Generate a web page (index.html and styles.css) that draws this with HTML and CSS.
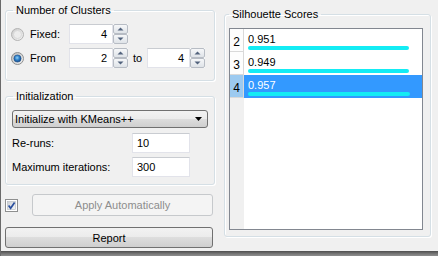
FILE: index.html
```html
<!DOCTYPE html>
<html>
<head>
<meta charset="utf-8">
<link rel="stylesheet" href="styles.css">
</head>
<body>
<div class="window">
  <div class="main">
    <div class="left">
      <fieldset class="group g-clusters">
        <legend>Number of Clusters</legend>
        <div class="row">
          <span class="radio">
            <svg width="13" height="13" viewBox="0 0 13 13"><defs><linearGradient id="ru" x1="0" y1="0" x2="1" y2="1"><stop offset="0" stop-color="#c9c9c9"/><stop offset="1" stop-color="#f6f6f6"/></linearGradient></defs><circle cx="6.5" cy="6.5" r="6" fill="url(#ru)" stroke="#b3b3b3"/><circle cx="6.5" cy="6.5" r="4" fill="#ececec" stroke="#d6d6d6" stroke-width="0.8"/></svg>
          </span>
          <span class="rlabel">Fixed:</span>
          <div class="spin">
            <div class="field">4</div>
            <div class="btns">
              <span class="sbtn"><svg width="7" height="4" viewBox="0 0 7 4"><path d="M0.5 3.5 L3.5 0.5 L6.5 3.5Z" fill="#52637d"/></svg></span>
              <span class="sbtn"><svg width="7" height="4" viewBox="0 0 7 4"><path d="M0.5 0.5 L3.5 3.5 L6.5 0.5Z" fill="#52637d"/></svg></span>
            </div>
          </div>
        </div>
        <div class="row">
          <span class="radio">
            <svg width="13" height="13" viewBox="0 0 13 13"><defs><linearGradient id="rc" x1="0" y1="0" x2="1" y2="1"><stop offset="0" stop-color="#b8b8b8"/><stop offset="1" stop-color="#f4f4f4"/></linearGradient><radialGradient id="rd" cx="45%" cy="40%" r="60%"><stop offset="0" stop-color="#8fd0f5"/><stop offset="0.55" stop-color="#2b7cc6"/><stop offset="1" stop-color="#174a86"/></radialGradient></defs><circle cx="6.5" cy="6.5" r="6" fill="url(#rc)" stroke="#8e8f8f"/><circle cx="6.5" cy="6.5" r="3.6" fill="url(#rd)" stroke="#1d4f8a" stroke-width="0.6"/></svg>
          </span>
          <span class="rlabel">From</span>
          <div class="spin">
            <div class="field">2</div>
            <div class="btns">
              <span class="sbtn"><svg width="7" height="4" viewBox="0 0 7 4"><path d="M0.5 3.5 L3.5 0.5 L6.5 3.5Z" fill="#52637d"/></svg></span>
              <span class="sbtn"><svg width="7" height="4" viewBox="0 0 7 4"><path d="M0.5 0.5 L3.5 3.5 L6.5 0.5Z" fill="#52637d"/></svg></span>
            </div>
          </div>
          <span class="to">to</span>
          <div class="spin spin2">
            <div class="field">4</div>
            <div class="btns">
              <span class="sbtn"><svg width="7" height="4" viewBox="0 0 7 4"><path d="M0.5 3.5 L3.5 0.5 L6.5 3.5Z" fill="#52637d"/></svg></span>
              <span class="sbtn"><svg width="7" height="4" viewBox="0 0 7 4"><path d="M0.5 0.5 L3.5 3.5 L6.5 0.5Z" fill="#52637d"/></svg></span>
            </div>
          </div>
        </div>
      </fieldset>

      <fieldset class="group g-init">
        <legend>Initialization</legend>
        <div class="combo">
          <span>Initialize with KMeans++</span>
          <svg width="7" height="4" viewBox="0 0 7 4"><path d="M0 0 L7 0 L3.5 4Z" fill="#000"/></svg>
        </div>
        <div class="frow f1"><span class="flabel">Re-runs:</span><div class="input">10</div></div>
        <div class="frow f2"><span class="flabel">Maximum iterations:</span><div class="input">300</div></div>
      </fieldset>

      <div class="apply-row">
        <span class="checkbox">
          <svg width="13" height="13" viewBox="0 0 13 13"><defs><linearGradient id="cb" x1="0" y1="0" x2="1" y2="1"><stop offset="0" stop-color="#cbcfd5"/><stop offset="1" stop-color="#f7f7f7"/></linearGradient></defs><rect x="0.5" y="0.5" width="12" height="12" fill="#fff" stroke="#8e8f8f"/><rect x="2.5" y="2.5" width="8" height="8" fill="url(#cb)" stroke="#b5b9bf" stroke-width="0.6"/><path d="M3.6 6.6 L5.6 9.2 L9.6 3.4" fill="none" stroke="#2b4f9e" stroke-width="1.7"/></svg>
        </span>
        <div class="btn disabled">Apply Automatically</div>
      </div>
      <div class="btn report">Report</div>
    </div>

    <div class="right">
      <fieldset class="group g-scores">
        <legend>Silhouette Scores</legend>
        <div class="list">
          <div class="lrow">
            <div class="hdr">2</div>
            <div class="cell"><div class="val">0.951</div><div class="bar" style="width:161px"></div></div>
          </div>
          <div class="lrow">
            <div class="hdr">3</div>
            <div class="cell"><div class="val">0.949</div><div class="bar" style="width:161px"></div></div>
          </div>
          <div class="lrow sel">
            <div class="hdr">4</div>
            <div class="cell"><div class="val">0.957</div><div class="bar" style="width:162px"></div></div>
          </div>
        </div>
      </fieldset>
    </div>
  </div>
  <div class="taskbar"></div>
</div>
</body>
</html>
```

FILE: styles.css
```css
html, body {
  margin: 0;
  padding: 0;
}
body {
  background: #f0f0f0;
  font-family: "Liberation Sans", Arial, sans-serif;
  font-size: 11px;
  color: #000;
}
.window {
  width: 438px;
  height: 256px;
  box-sizing: border-box;
  border-left: 1px solid #6a6a6a;
  display: flex;
  flex-direction: column;
  overflow: hidden;
}
.main {
  flex: 1;
  display: flex;
  padding-left: 4px;
  gap: 9px;
}
.left {
  width: 210px;
  display: flex;
  flex-direction: column;
  padding-top: 4px;
}
.right {
  width: 207px;
  padding-top: 8px;
}
.taskbar {
  height: 5px;
  background: linear-gradient(#4e4e4e, #7a7a7a 60%, #8e8e8e);
}

/* group boxes */
fieldset.group {
  margin: 0;
  min-width: 0;
  border: 1px solid #d5dfe5;
  border-radius: 3px;
  box-shadow: inset 1px 1px 0 #fff, 1px 1px 0 #fff;
  padding: 7px 5px 12px;
}
legend {
  padding: 0 3px;
  margin-left: 2px;
  line-height: 13px;
}
.g-init {
  margin-top: 9px !important;
  padding-bottom: 7px !important;
}
.g-scores {
  padding: 7px 7px 6px 4px !important;
}
.g-scores legend {
  margin-left: 0;
}

/* clusters rows */
.row {
  display: flex;
  align-items: center;
  height: 20px;
}
.row + .row {
  margin-top: 4px;
}
.radio {
  width: 13px;
  height: 13px;
  display: flex;
}
.rlabel {
  margin-left: 6px;
  width: 39px;
}
.spin {
  display: flex;
  width: 59px;
  height: 20px;
}
.spin2 {
  width: 58px;
}
.field {
  flex: 1;
  background: #fff;
  border: 1px solid #e2e3ea;
  border-top-color: #c9ccd1;
  text-align: right;
  padding-right: 5px;
  line-height: 18px;
}
.btns {
  width: 15px;
  display: flex;
  flex-direction: column;
  background: #fff;
}
.sbtn {
  flex: 1;
  display: flex;
  align-items: center;
  justify-content: center;
  border: 1px solid #b7bcc4;
  border-radius: 2px;
  background: linear-gradient(#f6f7f9, #dfe3e8);
}
.to {
  margin-left: 5px;
  width: 14px;
}

/* init */
.combo {
  margin: 0 1px;
  height: 18px;
  box-sizing: border-box;
  border: 1px solid #707070;
  border-radius: 3px;
  background: linear-gradient(#f2f2f2 0%, #ebebeb 50%, #dddddd 50%, #cfcfcf 100%);
  display: flex;
  align-items: center;
  justify-content: space-between;
  padding: 0 5px 0 2px;
}
.frow {
  display: flex;
  align-items: center;
  padding-left: 1px;
}
.f1 { margin-top: 5px; }
.f2 { margin-top: 4px; }
.flabel {
  width: 120px;
}
.input {
  width: 58px;
  height: 20px;
  box-sizing: border-box;
  background: #fff;
  border: 1px solid #e2e3ea;
  border-top-color: #c9ccd1;
  padding-left: 4px;
  line-height: 18px;
}

/* buttons */
.apply-row {
  margin-top: 9px;
  display: flex;
  align-items: center;
  gap: 14px;
}
.checkbox {
  width: 13px;
  height: 13px;
  display: flex;
}
.btn {
  box-sizing: border-box;
  border-radius: 3px;
  display: flex;
  align-items: center;
  justify-content: center;
}
.btn.disabled {
  width: 181px;
  height: 22px;
  border: 1px solid #c6c9cc;
  background: #f4f4f4;
  color: #8d8d8d;
}
.btn.report {
  margin-top: 11px;
  width: 208px;
  height: 21px;
  border: 1px solid #707070;
  background: linear-gradient(#f2f2f2 0%, #ebebeb 50%, #dddddd 50%, #cfcfcf 100%);
}

/* list */
.list {
  height: 202px;
  box-sizing: border-box;
  border: 1px solid #828790;
  background: linear-gradient(to right, #f0f0f0 0, #f0f0f0 14px, #fff 14px);
}
.lrow {
  display: flex;
  height: 23px;
}
.hdr {
  width: 14px;
  box-sizing: border-box;
  border-right: 1px solid #d9d9d9;
  border-bottom: 1px solid #d9d9d9;
  background: #fdfdfd;
  display: flex;
  align-items: center;
  justify-content: center;
  font-size: 12px;
  padding-top: 3px;
}
.cell {
  flex: 1;
  background: #fff;
  padding: 5px 0 0 4px;
}
.val {
  line-height: 11px;
  height: 11px;
}
.bar {
  margin-top: 1px;
  height: 3.5px;
  border-radius: 2px;
  background: #14ecf4;
}
.sel .hdr {
  background: #9ccaf0;
}
.sel .cell {
  background: #3399ff;
  color: #fff;
}
```
